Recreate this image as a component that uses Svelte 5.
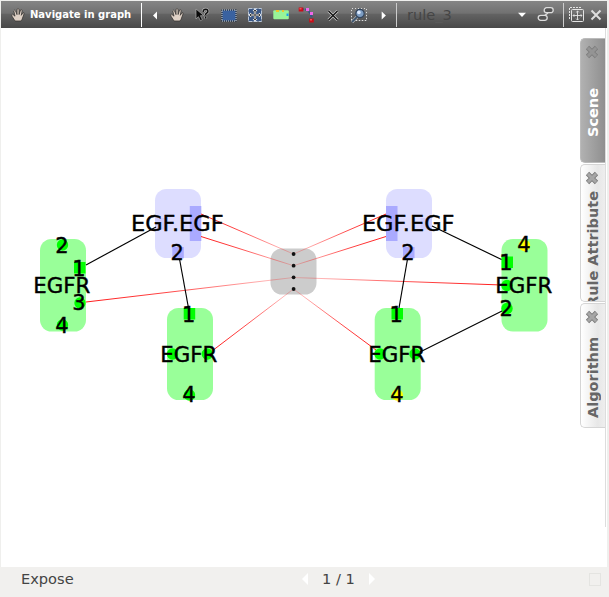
<script>
  const nodes = [
    { x: 155, y: 189, h: 69, c: '#ddf' }, { x: 386, y: 189, h: 69, c: '#ddf' },
    { x: 40, y: 239, h: 92.5, c: '#9f9' }, { x: 501.5, y: 239, h: 92.5, c: '#9f9' },
    { x: 167, y: 308, h: 92, c: '#9f9' }, { x: 374.7, y: 308, h: 92, c: '#9f9' },
    { x: 270.5, y: 248.5, h: 46, c: '#ccc' }
  ];
  const squares = [
    [189.8, 206, 11.5, 35, '#aaf'], [386, 206, 11.5, 35, '#aaf'],
    [155, 218, 11.5, 11.5, '#ccf'], [420.5, 218, 11.5, 11.5, '#ccf'],
    [172.3, 247, 11.5, 11.3, '#aaf'], [403, 247, 11.5, 11.3, '#aaf'],
    [74, 262, 11.5, 11.5, '#0f0'], [501.5, 256.5, 11.5, 11.5, '#0f0'],
    [183.7, 308, 11.5, 11.5, '#0f0'], [391.5, 308, 11.5, 11.5, '#0f0']
  ];
  const dots = [
    [62.5, 245, '#0f0'], [80, 303, '#0f0'], [62.5, 325, '#0f0'],
    [172.5, 354, '#0f0'], [207.3, 354, '#0f0'], [189.5, 395, '#0f0'],
    [380, 354, '#0f0'], [415, 354, '#0f0'], [397.3, 395, '#ff0'],
    [507, 285.5, '#0f0'], [507, 308.5, '#0f0'], [524.5, 245.5, '#ff0']
  ];
  const dark = [
    [86, 265, 156, 227], [179.5, 259, 188.5, 308], [407.5, 259, 399, 308],
    [432, 226, 501.5, 259.5], [420, 352, 502, 311]
  ];
  const red = [
    [201, 214, 293.5, 254], [201, 236.5, 293.5, 265.7], [386, 214, 293.5, 254],
    [386, 236.5, 293.5, 265.7], [86, 302, 293.5, 277.5], [502, 285, 293.5, 277.5],
    [212, 351, 293.5, 289], [376, 350, 293.5, 289]
  ];
  const labels = [
    ['EGF.EGF', 177.3, 231, 92.5], ['EGF.EGF', 408.2, 231, 92.5],
    ['EGFR', 61.8, 293, 57], ['EGFR', 523.8, 293, 57], ['EGFR', 188.8, 361.5, 57], ['EGFR', 396.8, 361.5, 57]
  ];
  const numbers = [
    [2, 177.1, 260], [2, 408, 260], [2, 62, 252.7], [1, 79, 275.5], [3, 79, 310.2], [4, 62, 333.3],
    [1, 188.6, 321.5], [4, 189, 402], [1, 396.3, 321.5], [4, 397, 402],
    [4, 524, 252.3], [1, 506, 269.8], [2, 506.3, 316.3]
  ];
  const tabs = [
    { name: 'Scene', h: 125, active: true },
    { name: 'Rule Attribute', h: 138, long: true },
    { name: 'Algorithm', h: 125 }
  ];
  const tools = ['hand', 'help', 'rect', 'move', 'node', 'curve', 'cross', 'zoom'];
</script>

{#snippet hand()}
  <path d="M5 14 2.2 9.5Q1 7.4 2.6 7.2L5 9.2 3.8 4Q4.7 2.2 5.7 4L7 7.6V2.3Q8 .9 9.1 2.3V7.5L10.5 3Q12 2.2 12.2 3.7L11.3 8.3 13 5.6Q14.4 5.2 14 7L12.1 12.3 11 14Z" fill="#dfd1c6" stroke="#393633" stroke-width=".8" />
{/snippet}

<div class="window">
  <header>
    <div class="mode"><svg width="16" height="16">{@render hand()}</svg><b>Navigate in graph</b></div>
    <i class="sep"></i>
    <svg class="scroll" width="22" height="16"><path d="M11 4.5v8L7 8.5z" transform="translate(4)" fill="#fff" /></svg>
    {#each tools as tool}
      <div class="tool">
        <svg width="18" height="16" viewBox="0 0 18 16">
          {#if tool === 'hand'}
            <g transform="translate(1)">{@render hand()}</g>
          {:else if tool === 'help'}
            <path d="M2 2v10l2.4-2.3 2 4 2-1-2-4H10z" fill="#080808" stroke="#aaa" stroke-width=".7" />
            <path d="M9.2 5Q9 2.2 11.7 2.2 14.3 2.4 13.8 5L11.7 7V8M11.7 9.6v2" fill="none" stroke="#bbb" stroke-width="2.8" />
            <path d="M9.2 5Q9 2.2 11.7 2.2 14.3 2.4 13.8 5L11.7 7V8M11.7 9.6v1.8" fill="none" stroke="#111" stroke-width="1.5" />
          {:else if tool === 'rect'}
            <rect x="2" y="3" width="14" height="11" fill="#3a62a0" stroke="#17283e" />
            <rect x="2" y="3" width="14" height="11" fill="none" stroke="#d8dde5" stroke-dasharray="1 1" />
          {:else if tool === 'move'}
            <rect x="2.5" y="1.5" width="13" height="13" fill="#3a5887" stroke="#b9c5d5" stroke-dasharray="4 1" />
            <path d="M9 3v10M4 8h10M7.5 4.5 9 3l1.5 1.5M7.5 11.5 9 13l1.5-1.5M5.5 6.5 4 8l1.5 1.5M12.5 6.5 14 8l-1.5 1.5" fill="none" stroke="#eee" stroke-width="2.2" />
            <path d="M9 3v10M4 8h10M7.5 4.5 9 3l1.5 1.5M7.5 11.5 9 13l1.5-1.5M5.5 6.5 4 8l1.5 1.5M12.5 6.5 14 8l-1.5 1.5" fill="none" stroke="#222" stroke-width=".8" />
          {:else if tool === 'node'}
            <rect x="1.3" y="3.2" width="15.5" height="9" rx="1" fill="#98f598" />
            <path d="M4 3h3v2H4zM10 3h2v2h-2z" fill="#edc72c" /><path d="M14.5 6.5h2v2.5h-2z" fill="#14a0ed" />
          {:else if tool === 'curve'}
            <path d="M3 2.5Q13 1 14 13" fill="none" stroke="#345689" stroke-width="2" stroke-dasharray="3 1" />
            <path d="M.7.5h4.6v4H.7zM11.2 11.5h4.6v4h-4.6z" fill="#c80e18" /><path d="M1.5 1h2v1.5h-2zM12 12h2v1.5h-2z" fill="#f25058" />
            <path d="M8 1h3v3H8zM12 5h3v3h-3z" fill="#ef68e8" />
          {:else if tool === 'cross'}
            <path d="m4.5 4 9 9m0-9-9 9" fill="none" stroke="#ccc" stroke-width="2.8" />
            <path d="m4.5 4 9 9m0-9-9 9" fill="none" stroke="#111" stroke-width="1.4" />
          {:else}
            <rect x="1.5" y="1.5" width="15" height="12" fill="none" stroke="#17191b" />
            <rect x="1.5" y="1.5" width="15" height="12" fill="none" stroke="#ddd" stroke-dasharray="2 1" />
            <path d="m7 10-5 5" stroke="#ccc" stroke-width="3" /><path d="m7 10-5 5" stroke="#3b536d" stroke-width="1.8" />
            <circle cx="10" cy="6.5" r="4.2" fill="#7c9cc2" stroke="#33455c" stroke-width="1.2" /><circle cx="8.9" cy="5.4" r="1.8" fill="#dceaff" />
          {/if}
        </svg>
      </div>
    {/each}
    <svg class="scroll next" width="24" height="16"><path d="M9.7 4.5v8l4.2-4z" fill="#fff" /></svg>
    <i class="sep dim"></i>
    <div class="combo"><span>rule<span class="faint">_</span>3</span><svg width="10" height="6"><path d="M1 .7h8L5 5z" fill="#fff" /></svg></div>
    <svg class="link" width="18" height="16" fill="#555" stroke="#ddd" stroke-width="1.3"><path d="m7 9 4-3" /><rect x="1.2" y="8.3" width="9" height="5" rx="2.5" /><rect x="7.2" y=".7" width="9" height="5" rx="2.5" /></svg>
    <i class="sep dim"></i>
    <svg class="expand" width="17" height="17" fill="none" stroke="#e4e4e4"><path d="M1.5 13V1.5H13" stroke-dasharray="2 1" /><rect x="3.5" y="3.5" width="12" height="12" rx="1" /><path d="M9.5 5v9M5 9.5h9M8.2 6.3l1.3-1.3 1.3 1.3M8.2 12.7l1.3 1.3 1.3-1.3M6.3 8.2 5 9.5l1.3 1.3M12.7 8.2 14 9.5l-1.3 1.3" stroke-width=".9" /></svg>
    <svg class="close" width="12" height="12"><path d="m1.5 1.5 9 9m0-9-9 9" stroke="#ddd" stroke-width="2" /></svg>
  </header>

  <main>
    <svg class="graph" viewBox="1 28 579 539" width="579" height="539">
      <defs>
        {#each red as [x1, y1, x2, y2], i}
          <linearGradient id={`fade${i}`} gradientUnits="userSpaceOnUse" {x1} {y1} {x2} {y2}>
            <stop stop-color="#f00" /><stop offset=".4" stop-color="#f00" stop-opacity=".8" /><stop offset="1" stop-color="#f00" stop-opacity=".2" />
          </linearGradient>
        {/each}
      </defs>
      {#each nodes as n}<rect x={n.x} y={n.y} width="46" height={n.h} rx="11.5" fill={n.c} />{/each}
      {#each squares as [x, y, width, height, fill]}<rect {x} {y} {width} {height} {fill} />{/each}
      {#each dots as [cx, cy, fill]}<circle {cx} {cy} r="5.7" {fill} />{/each}
      {#each red as [x1, y1, x2, y2], i}<line {x1} {y1} {x2} {y2} stroke={`url(#fade${i})`} stroke-width=".9" />{/each}
      {#each dark as [x1, y1, x2, y2]}<line {x1} {y1} {x2} {y2} stroke="#000" stroke-width="1.15" />{/each}
      {#each [254, 265.7, 277.3, 289] as cy}<circle cx="293.6" {cy} r="1.9" fill="#111" />{/each}
      {#each labels as [text, x, y, len]}<text class="label" {x} {y} textLength={len} lengthAdjust="spacingAndGlyphs">{text}</text>{/each}
      {#each numbers as [text, x, y]}<text {x} {y}>{text}</text>{/each}
    </svg>
    <aside>
      {#each tabs as tab}
        <div class="tab" class:active={tab.active} style:height={`${tab.h}px`}>
          <svg width="14" height="14"><path d="m2.5 2.5 9 9m0-9-9 9" stroke={tab.active ? '#7c7c7c' : '#777'} stroke-width="4.6" /><path d="m2.9 2.9 8.2 8.2m0-8.2-8.2 8.2" stroke={tab.active ? '#949494' : '#a6a6a6'} stroke-width="3" /></svg>
          <div class="name" class:long={tab.long}><span>{tab.name}</span></div>
        </div>
      {/each}
    </aside>
  </main>

  <footer>
    <span class="expose">Expose</span>
    <div class="pager">
      <svg width="6" height="12"><path d="M6 0v12L0 6z" fill="#fff" /></svg>
      <span>1 / 1</span>
      <svg width="6" height="12"><path d="M0 0v12l6-6z" fill="#fff" /></svg>
    </div>
    <i class="check"></i>
  </footer>
</div>

<style>
  :global(body) { margin: 0; overflow: hidden; }
  .window { width: 609px; height: 597px; box-sizing: border-box; padding: 1px 0 0 1px; background: #efefed; display: flex; flex-direction: column; font-family: "DejaVu Sans", sans-serif; }
  svg { display: block; flex: none; }
  header { width: 606px; height: 27px; flex: none; display: flex; align-items: center; background: linear-gradient(#858585, #717171 45%, #626262 50%, #484848); }
  .mode { width: 140px; flex: none; display: flex; align-items: center; box-sizing: border-box; padding-left: 9px; gap: 4px; color: #fff; font-size: 10px; white-space: nowrap; }
  .sep { width: 1px; height: 24px; background: #fff; flex: none; }
  .sep.dim { background: #ccc; }
  .tool { width: 26px; display: flex; justify-content: center; flex: none; }
  .combo { width: 130px; flex: none; padding-left: 10px; box-sizing: border-box; display: flex; align-items: center; justify-content: space-between; color: #454545; font-size: 14.6px; }
  .faint { color: #595959; }
  .link { margin: 0 8px 0 10px; }
  .expand { margin-left: 4px; }
  .close { margin-left: 5px; }
  main { height: 539px; width: 606px; display: flex; background: #fff; flex: none; }
  .graph text { font: 21px "DejaVu Sans", sans-serif; text-anchor: middle; fill: #000; stroke: #000; stroke-width: .4px; }
  .graph .label { font-size: 20.5px; }
  aside { width: 26px; height: 499px; box-sizing: border-box; padding-top: 10px; display: flex; flex-direction: column; gap: 1px; background: linear-gradient(#ddd, #ddd) right top / 1px 100% no-repeat; }
  .tab { width: 25px; box-sizing: border-box; border: 1px solid #d5d5d5; border-right: 0; border-radius: 5px 0 0 5px; background: linear-gradient(90deg, #fff, #e7e7e7 70%, #eee); display: flex; flex-direction: column; align-items: center; padding-top: 6px; color: #666; overflow: hidden; flex: none; }
  .tab svg { position: relative; left: -1px; }
  .tab.active { background: linear-gradient(90deg, #b1b1b1, #8f8f8f); color: #fff; border-color: #bbb; }
  .name { flex: 1; min-height: 0; display: flex; align-items: center; justify-content: center; overflow: hidden; writing-mode: vertical-rl; transform: rotate(180deg); font-size: 14.5px; line-height: 22px; font-weight: bold; white-space: nowrap; margin-top: 4px; width: 24px; }
  .name.long { justify-content: flex-end; margin-top: 6px; }
  .name span { flex: none; }
  footer { height: 30px; display: flex; align-items: center; color: #444; font-size: 14.6px; line-height: 18px; background: #f1f0ee; margin-left: -1px; padding-left: 21px; padding-bottom: 6px; box-sizing: border-box; }
  .expose { width: 281px; }
  .pager { display: flex; align-items: center; gap: 14px; white-space: nowrap; }
  .check { width: 12px; height: 13px; border: 1px solid #e4e4e1; box-sizing: border-box; margin-left: auto; margin-right: 8px; }
</style>
